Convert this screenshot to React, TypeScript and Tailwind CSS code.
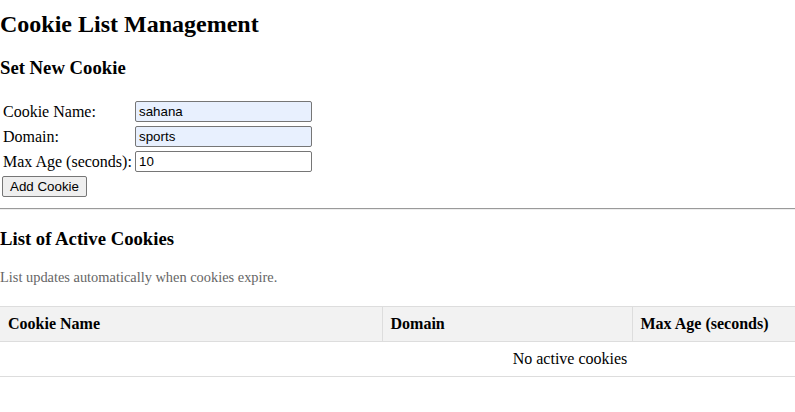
import { useState } from 'react'

const serif = "font-['Liberation_Serif','Times_New_Roman',serif]"

function Field({
  label,
  value,
  filled,
}: {
  label: string
  value: string
  filled?: boolean
}) {
  return (
    <div className="flex items-center h-[21px]">
      <span className="w-[132px] text-[16px] leading-[18px] text-black">{label}</span>
      <input
        readOnly
        value={value}
        className={`w-[177px] h-[21px] border border-[#767676] rounded-[2px] px-[3px] text-[13.33px] text-black font-['Liberation_Sans',Arial,sans-serif] outline-none ${
          filled ? 'bg-[#e8f0fe]' : 'bg-white'
        }`}
      />
    </div>
  )
}

export default function App() {
  const [cookies] = useState<{ name: string; domain: string; maxAge: number }[]>([])

  return (
    <div className={`w-full overflow-hidden bg-white text-black ${serif}`}>
      <h1 className="mt-[10px] text-[24px] leading-[28px] font-bold">Cookie List Management</h1>

      <h3 className="mt-[19px] text-[18.72px] leading-[22px] font-bold">Set New Cookie</h3>

      {/* Form */}
      <div className="mt-[22px] pl-[3px] flex flex-col gap-[4px]">
        <Field label="Cookie Name:" value="sahana" filled />
        <Field label="Domain:" value="sports" filled />
        <Field label="Max Age (seconds):" value="10" />
      </div>
      <button className="mt-[4px] ml-[2px] w-[85px] h-[21px] border border-[#767676] rounded-[2px] bg-[#efefef] text-[13.33px] font-['Liberation_Sans',Arial,sans-serif] text-black">
        Add Cookie
      </button>

      <div className="mt-[10px] border-t border-t-[#9a9a9a] border-b border-b-[#eeeeee]" />

      <h3 className="mt-[18px] text-[18.72px] leading-[22px] font-bold">List of Active Cookies</h3>

      <p className="mt-[19px] text-[14.4px] leading-[16px] text-[#666666]">
        List updates automatically when cookies expire.
      </p>

      {/* Table */}
      <table className="mt-[21px] w-[1140px] border-collapse text-[16px] leading-[18px]">
        <thead>
          <tr className="bg-[#f2f2f2]">
            <th className="w-[382px] border-y border-[#dddddd] px-[8px] py-[8px] text-left font-bold">
              Cookie Name
            </th>
            <th className="w-[250px] border border-[#dddddd] px-[8px] py-[8px] text-left font-bold">
              Domain
            </th>
            <th className="border-y border-[#dddddd] px-[8px] py-[8px] text-left font-bold">
              Max Age (seconds)
            </th>
          </tr>
        </thead>
        <tbody>
          {cookies.length === 0 ? (
            <tr>
              <td colSpan={3} className="border-b border-[#dddddd] px-[8px] py-[8px] text-center">
                No active cookies
              </td>
            </tr>
          ) : (
            cookies.map((c) => (
              <tr key={c.name}>
                <td className="border-b border-[#dddddd] px-[8px] py-[8px]">{c.name}</td>
                <td className="border-b border-[#dddddd] px-[8px] py-[8px]">{c.domain}</td>
                <td className="border-b border-[#dddddd] px-[8px] py-[8px]">{c.maxAge}</td>
              </tr>
            ))
          )}
        </tbody>
      </table>
      <div className="h-[36px]" />
    </div>
  )
}
